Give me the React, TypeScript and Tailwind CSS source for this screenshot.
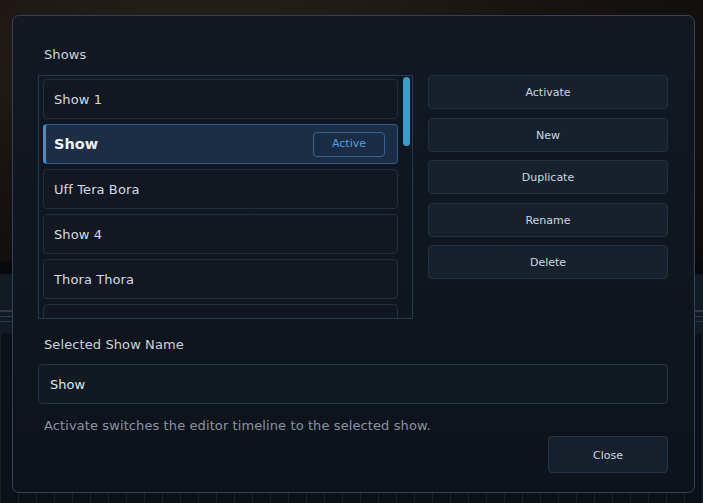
import React from "react";

const font = { fontFamily: '"DejaVu Sans", Verdana, sans-serif' };

const shows = ["Show 1", "Show", "Uff Tera Bora", "Show 4", "Thora Thora", ""];
const actions = ["Activate", "New", "Duplicate", "Rename", "Delete"];

export default function App() {
  return (
    <div className="relative w-[703px] h-[503px] overflow-hidden bg-[#0b0a0a]" style={font}>
      {/* dimmed app background */}
      <div className="absolute inset-x-0 top-0 h-[262px] bg-[radial-gradient(ellipse_at_30%_20%,#2a211c_0%,#17120f_55%,#0d0b0a_100%)]" />
      <div className="absolute inset-x-0 top-[262px] h-[12px] bg-[#07090c]" />
      <div className="absolute inset-x-0 top-[274px] h-[60px] bg-[#121a24]">
        <div className="h-[2px] mt-[36px] bg-[#3a3352]" />
        <div className="h-[1px] mt-[4px] bg-[#27405a]" />
        <div className="h-[1px] mt-[4px] bg-[#22384e]" />
      </div>
      <div className="absolute inset-x-0 top-[334px] bottom-0 bg-[#0c1117] bg-[repeating-linear-gradient(90deg,#19222c_0px,#19222c_1px,transparent_1px,transparent_18px)]" />

      {/* dialog */}
      <div className="absolute left-[12px] top-[15px] w-[683px] h-[478px] rounded-[7px] border border-[#31435a] bg-gradient-to-b from-[#121923] to-[#0d131a] pl-[25px] pr-[26px] pt-[29px] pb-[19px] flex flex-col">
        <div className="h-[18px] leading-[18px] pt-[1px] pl-[6px] text-[13px] tracking-[0.1px] text-[#cbd4de]">Shows</div>

        <div className="mt-[12px] flex gap-[15px]">
          {/* list box */}
          <div className="w-[375px] h-[244px] border border-[#26384b] flex pl-[4px] pr-[2px] pt-[3px] overflow-hidden">
            <div className="w-[355px] flex flex-col gap-[5px] shrink-0">
              {shows.map((s, i) =>
                i === 1 ? (
                  <div
                    key={i}
                    className="h-[40px] shrink-0 rounded-[4px] border border-[#2e5b87] border-l-[3px] border-l-[#3d8fdc] bg-[#1b2e45] pl-[8px] pr-[12px] flex items-center justify-between"
                  >
                    <span className="pt-[2px] text-[14.5px] font-bold text-[#eef3f8]">{s}</span>
                    <span className="w-[72px] h-[25px] pt-[1px] rounded-[4px] border border-[#34679b] bg-[#192c43] flex items-center justify-center text-[11px] text-[#4ea2e4]">
                      Active
                    </span>
                  </div>
                ) : (
                  <div
                    key={i}
                    className="h-[40px] shrink-0 rounded-[4px] border border-[#222f3e] bg-[#111822] pl-[10px] pt-[2px] flex items-center text-[13px] tracking-[0.1px] text-[#d3dbe4]"
                  >
                    {s}
                  </div>
                )
              )}
            </div>
            <div className="ml-[5px] w-[7px] shrink-0">
              <div className="mt-[-2px] h-[69px] w-[7px] rounded-full bg-[#3b9ec9]" />
            </div>
          </div>

          {/* action buttons */}
          <div className="w-[240px] flex flex-col gap-[8.5px]">
            {actions.map((a) => (
              <div
                key={a}
                className="h-[34px] pt-[3px] rounded-[4px] border border-[#23313f] bg-[#17212d] flex items-center justify-center text-[11px] text-[#cdd6e0]"
              >
                {a}
              </div>
            ))}
          </div>
        </div>

        <div className="mt-[16px] h-[18px] leading-[18px] pt-[1px] pl-[6px] text-[13px] tracking-[0.1px] text-[#cbd4de]">Selected Show Name</div>
        <div className="mt-[11px] h-[40px] rounded-[4px] border border-[#253444] bg-[#111922] pl-[11px] pt-[1px] flex items-center text-[13px] text-[#dfe5eb]">
          Show
        </div>
        <div className="mt-[12px] h-[18px] leading-[18px] pt-[1px] pl-[6px] text-[13px] tracking-[0.1px] text-[#8794a3]">
          Activate switches the editor timeline to the selected show.
        </div>
        <div className="mt-[2px] flex justify-end">
          <div className="w-[120px] h-[37px] pt-[3px] rounded-[4px] border border-[#273646] bg-[#17212d] flex items-center justify-center text-[11px] text-[#cdd6e0]">
            Close
          </div>
        </div>
      </div>
    </div>
  );
}
